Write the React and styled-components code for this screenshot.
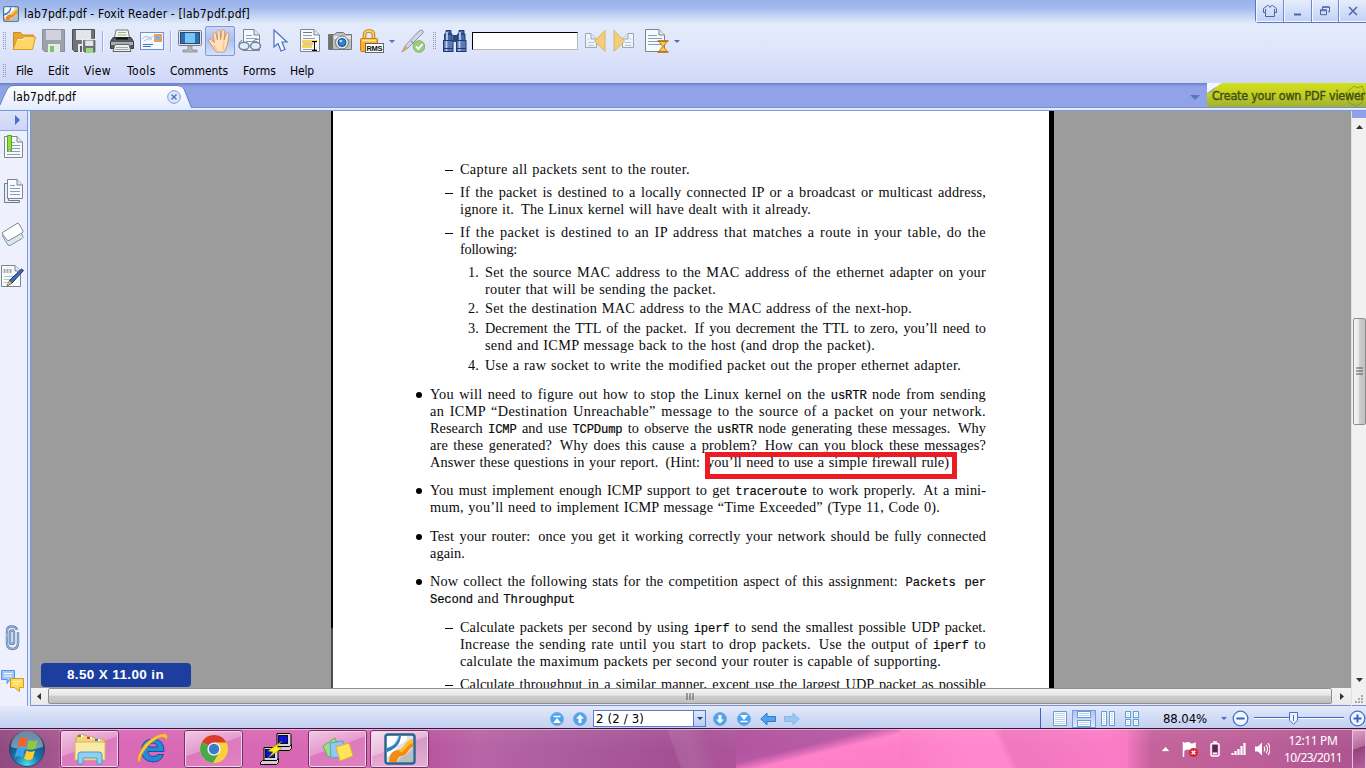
import React, { useLayoutEffect, useRef } from "react";
import styled, { createGlobalStyle } from "styled-components";

const Global = createGlobalStyle`
  * { box-sizing: border-box; }
  body { margin: 0; overflow: hidden; }
  svg { display: block; flex: none; }
`;

const uiFont = `"DejaVu Sans Condensed", "DejaVu Sans", sans-serif`;

const FitSpan = styled.span`
  display: inline-block;
  white-space: pre;
  flex: none;
`;

/* Spreads a run of text over an exact width through letter or word spacing. */
function Fit({ w, by = "letterSpacing", ws = 0, children }) {
  const ref = useRef(null);
  useLayoutEffect(() => {
    const el = ref.current;
    el.style.wordSpacing = ws + "px";
    el.style[by] = "0px";
    const a = el.getBoundingClientRect().width;
    el.style[by] = "1px";
    const b = el.getBoundingClientRect().width;
    if (b > a) el.style[by] = (w - a) / (b - a) + "px";
  }, [w, by, ws]);
  return <FitSpan ref={ref}>{children}</FitSpan>;
}

const Screen = styled.div`
  width: 1366px;
  height: 768px;
  display: flex;
  flex-direction: column;
  overflow: hidden;
  font-family: ${uiFont};
  font-size: 12px;
  color: #000;
`;

/* ---------- header ---------- */
const Header = styled.header`
  height: 83px;
  flex: none;
  display: flex;
  flex-direction: column;
  background: linear-gradient(#98b2ea 0, #a3bbed 8px, #c4d5f4 16px, #e3ebfb 24px, #e2e8fb 40px, #d0d8f8 83px);
`;
const TitleBar = styled.div`
  height: 26px;
  display: flex;
  align-items: flex-start;
`;
const TitleText = styled.div`
  display: flex;
  align-items: center;
  gap: 5px;
  height: 27px;
  padding-left: 3px;
  flex: 1;
`;
const WinButtons = styled.div`
  display: flex;
  width: 111px;
  height: 23px;
  border: 1px solid #5a76c8;
  border-width: 0 0 1px 1px;
  border-radius: 0 0 0 4px;
  background: linear-gradient(#e6edfb, #d3dff9 50%, #c3d1f4);
`;
const WinButton = styled.div`
  width: 28px;
  display: flex;
  align-items: center;
  justify-content: center;
  border-left: ${(p) => (p.$first ? "0" : "1px solid #6d86cf")};
  box-shadow: inset 1px -1px 0 #f4f7ff;
`;
const Toolbar = styled.div`
  height: 30px;
  display: flex;
  align-items: center;
  padding-left: 3px;
`;
const Slot = styled.div`
  width: ${(p) => p.$w || 24}px;
  height: ${(p) => p.$h || 24}px;
  margin-left: ${(p) => p.$ml || 0}px;
  flex: none;
  display: flex;
  align-items: center;
  justify-content: center;
`;
const ActiveSlot = styled(Slot)`
  border: 1px solid #8098d8;
  border-radius: 2px;
  background: linear-gradient(#c9d6f8, #aabff2 45%, #d4e2ff);
`;
const Separator = styled.div`
  width: 2px;
  height: 21px;
  margin-left: ${(p) => p.$ml}px;
  background: #9db1e4;
  border-right: 1px solid #f5f8ff;
  flex: none;
`;
const Grip = styled.div`
  width: 3px;
  height: ${(p) => p.$h}px;
  margin-left: ${(p) => p.$ml || 0}px;
  background-image: conic-gradient(transparent 75%, #8f94a8 0);
  background-size: 2px 2px;
  flex: none;
`;
const Caret = styled.div`
  width: 0;
  height: 0;
  margin-left: ${(p) => p.$ml || 0}px;
  border: ${(p) => p.$s || 3}px solid transparent;
  border-top-color: ${(p) => p.$c || "#4a6fc0"};
  border-bottom: 0;
  flex: none;
`;
const FindInput = styled.div`
  width: 106px;
  height: 18px;
  margin-left: 5px;
  background: #fff;
  border: 1px solid #b8b8b8;
  border-top-color: #000;
  border-left-color: #000;
  flex: none;
`;
const MenuBar = styled.nav`
  height: 27px;
  display: flex;
  align-items: center;
  padding: 2px 0 0 3px;
`;
const MenuItem = styled.span`
  margin-left: ${(p) => p.$ml}px;
  display: flex;
`;

/* ---------- tabs ---------- */
const TabBar = styled.div`
  height: 28px;
  flex: none;
  display: flex;
  justify-content: space-between;
  background: linear-gradient(#6b7fc4 0, #8c9fe2 3px, #90a3e8 5px, #90a3e8 24px, #7a8fd8 24px, #7a8fd8 25px, #e6edff 25px, #dfe8ff 27px, #7b98e0 27px);
`;
const Tab = styled.div`
  width: 192px;
  height: 26px;
  display: grid;
  grid-template-areas: "stack";
  > * { grid-area: stack; }
`;
const TabLabel = styled.div`
  display: flex;
  align-items: center;
  justify-content: space-between;
  padding: 2px 11px 0 13px;
`;
const TabRight = styled.div`
  display: flex;
  gap: 7px;
  align-items: center;
  height: 24px;
`;
const TabCaret = styled.div`
  padding-top: 5px;
`;
const Banner = styled.div`
  width: 159px;
  height: 24px;
  display: grid;
  grid-template-areas: "stack";
  background: linear-gradient(#d3e01c, #c3d022 45%, #9fb030);
  color: #3f4d12;
  font-size: 12.5px;
  -webkit-text-stroke: 0.35px #3f4d12;
  > * { grid-area: stack; }
`;
const BannerText = styled.div`
  padding: 5px 0 0 5px;
  line-height: 16px;
`;

/* ---------- work area ---------- */
const Work = styled.div`
  height: 595px;
  display: flex;
  flex: none;
`;
const Sidebar = styled.aside`
  width: 31px;
  display: flex;
  flex-direction: column;
  align-items: flex-start;
  background: linear-gradient(90deg, #eef0fe 27px, #7b98e0 27px 28px, #e3ebfd 28px 30px, #7b98e0 30px);
`;
const SideToggle = styled.div`
  width: 27px;
  height: 20px;
  padding: 4px 0 0 15px;
  background: linear-gradient(#dbe2fa, #ccd5f7);
  border-bottom: 1px solid #8fa3e0;
`;
const SideIcon = styled.div`
  margin: ${(p) => p.$mt}px 0 0 1px;
  width: 24px;
  height: 26px;
`;
const Viewer = styled.div`
  width: 1320px;
  display: flex;
  flex-direction: column;
`;
const Canvas = styled.main`
  position: relative;
  height: 577px;
  flex: none;
  display: flex;
  justify-content: center;
  background: #9c9c9c;
  overflow: hidden;
  padding-left: 3px;
`;
const Page = styled.article`
  position: relative;
  width: 723px;
  height: 700px;
  flex: none;
  padding: 50px 0 0 84px;
  border-right: 5px solid #000;
  background:
    linear-gradient(#000 0 516px, #4c4c4c 518px) 0 0 / 2px 100% no-repeat,
    #fff;
  font-family: "Liberation Serif", serif;
  font-size: 14.3px;
  line-height: 17px;
  color: #0a0a0a;
`;
const Item = styled.div`
  display: flex;
  margin-top: ${(p) => p.$gap}px;
`;
const Marker = styled.div`
  width: ${(p) => p.$w}px;
  padding-left: ${(p) => p.$pad}px;
  flex: none;
`;
const Bullet = styled.div`
  width: 6px;
  height: 6px;
  margin-top: 6px;
  border-radius: 50%;
  background: #000;
`;
const Dash = styled.div`
  width: 8px;
  height: 1px;
  margin-top: 9px;
  background: #000;
`;
const Line = styled.div`
  height: 17px;
  display: flex;
`;
const Code = styled.code`
  font-family: "Liberation Mono", monospace;
  font-size: 12.2px;
  letter-spacing: -0.15px;
  vertical-align: 0.5px;
  line-height: 1;
  -webkit-text-stroke: 0.2px #000;
`;
const SentenceGap = styled.span`
  padding-right: 2.5px;
`;
const Highlight = styled.div`
  position: absolute;
  left: 374px;
  top: 341px;
  width: 252px;
  height: 27px;
  border: 5px solid #ed1c24;
`;
const PageSize = styled.div`
  position: absolute;
  left: 10px;
  bottom: 1px;
  width: 150px;
  height: 24px;
  border-radius: 4px;
  background: #1b3e9f;
  color: #fff;
  font: bold 13.5px/24px "Liberation Sans", sans-serif;
  display: flex;
  padding-left: 26px;
`;
const HScroll = styled.div`
  height: 18px;
  display: flex;
  align-items: stretch;
  background: linear-gradient(#f4f4f4, #e9e9e9);
  border-bottom: 1px solid #7b8fd0;
  padding-bottom: 1px;
`;
const HArrow = styled.div`
  width: ${(p) => p.$w}px;
  display: flex;
  align-items: center;
  padding-left: ${(p) => p.$pl}px;
`;
const HThumb = styled.div`
  width: 1284px;
  height: 16px;
  border: 1px solid #8f8f8f;
  border-radius: 2px;
  background: linear-gradient(#f5f5f5, #e6e6e6 45%, #cecece 50%, #bfbfbf);
  display: flex;
  align-items: center;
  justify-content: center;
`;
const VScroll = styled.div`
  width: 15px;
  display: flex;
  flex-direction: column;
  align-items: center;
  background: #f1f1f1;
  border-left: 1px solid #e2e2e2;
`;
const VTop = styled.div`
  width: 15px;
  height: 7px;
  background: #90a3e8;
`;
const VArrow = styled.div`
  height: 19px;
  padding-top: ${(p) => p.$pt}px;
`;
const VThumb = styled.div`
  width: 13px;
  height: 107px;
  margin: 181px 0 244px 1px;
  border: 1px solid #8f8f8f;
  border-radius: 2px;
  background: linear-gradient(90deg, #f5f5f5, #e6e6e6 45%, #cecece 50%, #bfbfbf);
  display: flex;
  align-items: center;
  justify-content: center;
`;
const Corner = styled.div`
  width: 14px;
  height: 18px;
  margin-top: auto;
  background: #f0f0f0;
  border-bottom: 1px solid #7b8fd0;
  padding: 7px 0 0 1px;
`;

/* ---------- status bar ---------- */
const StatusBar = styled.footer`
  height: 22px;
  flex: none;
  display: flex;
  align-items: center;
  padding: 3px 0 0 550px;
  background: linear-gradient(#e4eafa, #d3dcf6 50%, #c2d0f2);
  font-size: 13px;
`;
const PageBox = styled.div`
  width: 113px;
  height: 17px;
  margin: 0 7px 0 6px;
  padding-left: 2px;
  display: flex;
  align-items: center;
  justify-content: space-between;
  background: #fff;
  border: 1px solid #5879cc;
`;
const DropButton = styled.div`
  width: 12px;
  height: 15px;
  display: flex;
  align-items: center;
  justify-content: center;
  background: linear-gradient(#dfe8fc, #b9caf3);
  border-left: 1px solid #5879cc;
`;
const StatusIcon = styled.div`
  margin-right: ${(p) => p.$mr}px;
`;
const ViewModes = styled.div`
  display: flex;
  align-items: center;
  height: 22px;
  margin-left: 240px;
  border-left: 1px solid #4060c8;
  padding-left: 7px;
`;
const ViewMode = styled.div`
  width: 24px;
  height: 18px;
  display: flex;
  align-items: center;
  justify-content: center;
  ${(p) => p.$on && "border: 1px solid #7d97dc; background: linear-gradient(#aec2f2, #dfe9ff);"}
`;
const ZoomText = styled.div`
  margin-left: 19px;
`;

/* ---------- taskbar ---------- */
const Taskbar = styled.div`
  height: 40px;
  flex: none;
  display: flex;
  border-top: 1px solid #3a1535;
  box-shadow: inset 0 1px 0 rgba(255, 215, 240, 0.6);
  background:
    linear-gradient(rgba(255, 255, 255, 0.06), rgba(255, 255, 255, 0) 50%),
    linear-gradient(to bottom right, #ad5099 0, #b658a4 42%, #e06cb8 50%, #ff82c9 56%, #fb7cc5) 736px 0 / 164px 40px no-repeat,
    linear-gradient(70deg, transparent 30%, rgba(255, 255, 255, 0.09) 32% 44%, transparent 60%) 640px 0 / 120px 40px no-repeat,
    linear-gradient(90deg, #8f4a80 0, #a4568e 58px, #d968b6 62px, #d868b4 370px, #b9559f 430px, #b765a6 480px, #ab5d9e 560px, #a35093 680px, #ad5499 736px, transparent 736px),
    linear-gradient(65deg, #fb7cc5 0, #ff86cc 60px, #ff88cd 100px, #f176be 108px, #fa7cc6 200px, #f678bf 100%) 900px 0 / 228px 40px no-repeat,
    linear-gradient(90deg, #f678bf 1125px, #c4629b 1152px, #bb5f98 1260px, #ad5590 1352px);
`;
const StartCell = styled.div`
  width: 60px;
  padding: 1px 0 0 8px;
`;
const TaskButton = styled.div`
  width: 59px;
  height: 38px;
  margin: 1px ${(p) => p.$mr || 3}px 0 0;
  display: flex;
  align-items: center;
  justify-content: center;
  ${(p) =>
    p.$open &&
    `border: 1px solid #f6d3ea; border-radius: 3px; outline: 1px solid #74305f; outline-offset: -1px;
     box-shadow: inset 0 0 0 1px #f6d3ea;
     background: linear-gradient(160deg, rgba(255,255,255,.62), rgba(255,255,255,.32) 45%, rgba(255,255,255,.1) 46%, rgba(255,255,255,.18));`}
  ${(p) => p.$active && `background: linear-gradient(160deg, rgba(255,255,255,.8), rgba(255,255,255,.55) 45%, rgba(255,255,255,.38) 46%, rgba(255,255,255,.55));`}
`;
const Tray = styled.div`
  margin-left: auto;
  display: flex;
  align-items: center;
  height: 40px;
`;
const TrayIcon = styled.div`
  margin-right: ${(p) => p.$mr}px;
`;
const Clock = styled.div`
  width: 72px;
  padding-right: 6px;
  display: flex;
  flex-direction: column;
  align-items: center;
  color: #fff;
  font: 12px/17px "Noto Sans", sans-serif;
`;
const ShowDesktop = styled.div`
  width: 14px;
  height: 39px;
  border: 1px solid #f0c2dc;
  background: linear-gradient(160deg, #dba0c4, #b76a9d 45%, #93447c 46%, #b5609b);
`;

/* ---------- drawings ---------- */
const Svg = ({ w = 24, h = 24, vb, children }) => (
  <svg width={w} height={h} viewBox={vb || `0 0 ${w} ${h}`} fill="none">
    {children}
  </svg>
);

const FoxitIcon = ({ s }) => (
  <Svg w={s} h={s} vb="0 0 32 32">
    <rect x="1.5" y="1.5" width="29" height="29" rx="2.5" fill="#dfe3e8" stroke="#24648f" strokeWidth="2.4" />
    <path d="M3 3h10c-2 8-6 11-10 13z" fill="#fff" />
    <path d="M3 15c7-2 10-5 12-12h3c-1 9-6 14-15 17z" fill="#2b7ec0" />
    <path d="M3 19C12 16 16 11 17 3h6c0 4-2 6-6 8-6 3-5 10-14 13z" fill="#fff" />
    <path d="M5 29c0-8 3-11 9-12 7-1 6-9 15-11v8c-5 2-5 6-8 8-4 2-7 0-8 7z" fill="#f58a12" />
    <path d="M14 17c7-1 6-9 15-11v4c-7 2-7 8-12 9z" fill="#ffc02a" />
    <path d="M14 29c1-6 5-5 8-7s4-5 7-7v14z" fill="#b9bcc0" />
  </Svg>
);
const FolderIcon = () => (
  <Svg>
    <path d="M1.500 20.500V3.500h7l2 2.500h11v5" fill="#e9a92e" stroke="#c98a1b" />
    <path d="M1 20.500L5 9.500h5l1.500-1.500H23.500L20.500 20.500z" fill="#ffd567" stroke="#d89a24" />
    <path d="M5.500 10.500h6l1-1.500h9" stroke="#fff0b5" />
  </Svg>
);
const DiskShape = ({ dark }) => (
  <>
    <path d="M.5.5h22v22h-20l-2-2z" fill={dark ? "#6f7276" : "#9da1ab"} stroke={dark ? "#4d4f52" : "#8b8f99"} />
    <path d="M4 1h15v10H4z" fill={dark ? "#e3e6ea" : "#cfd3de"} />
    <path d="M6 15h12v8H6z" fill="#e4eae8" />
    <path d="M8 17h4v6H8z" fill={dark ? "#555" : "#7cc46a"} />
  </>
);
const SaveAllIcon = () => (
  <Svg>
    <DiskShape dark />
    <g transform="translate(11 11) scale(.54)">
      <rect x="-2" y="-2" width="27" height="27" fill="#fff" />
      <DiskShape dark />
      <path d="M6 15h12v8H6z" fill="#8fe07a" />
    </g>
  </Svg>
);
const PrinterIcon = () => (
  <Svg>
    <path d="M6 1h12l2 10H4z" fill="#f2f4f0" stroke="#75786f" />
    <path d="M8 3.500h8M7.500 6h9" stroke="#9ab38c" />
    <path d="M3 8.500h18l2.500 4v7h-23v-7z" fill="#555a5e" stroke="#37393c" />
    <path d="M1 13h22v3H1z" fill="#a9adb1" />
    <path d="M5 15.500h14l2 7H3z" fill="#eceef0" stroke="#666" />
    <path d="M6 18.500h12M5.500 20.500h13" stroke="#9aa" />
    <path d="M6 9.500h12" stroke="#111" strokeWidth="2" />
  </Svg>
);
const MailIcon = () => (
  <Svg>
    <rect x=".5" y="3.500" width="23" height="17" fill="#f6faff" stroke="#6b93cf" />
    <path d="M2 10q3-4 6-2t5-1M4 12q3-3 8-2" stroke="#9fbde6" />
    <path d="M3 15.500h10M3 17.500h8" stroke="#3b71c8" />
    <rect x="14.500" y="5.500" width="7" height="7" fill="#f0a045" stroke="#c86f28" strokeDasharray="1 1" />
    <rect x="16" y="7" width="4" height="4" fill="#7db0e8" />
  </Svg>
);
const MonitorIcon = () => (
  <Svg>
    <rect x=".5" y="1.500" width="23" height="15" rx="1" fill="#dfe2e6" stroke="#777b80" />
    <rect x="2.500" y="3.500" width="19" height="11" fill="#2c6db5" stroke="#274a75" />
    <path d="M7 4h10v10H7z" fill="#77c4f5" />
    <path d="M10 17h4v4h5v2H5v-2h5z" fill="#b7babd" stroke="#85898d" strokeWidth=".8" />
  </Svg>
);
const HandIcon = () => (
  <Svg>
    <path d="M8 23l-4.500-7-3-4.500c.5-2 2.500-1.500 3.500 0l2.500 2L5 5.500C5 3 7.500 3 8 5l1.500 6L9 2.500C9.500.500 12 .500 12 2.500l.6 8L14 2c.5-2 3-1.500 2.700.5L16 11l2.500-6.500c1-1.500 2.800-.5 2.500 1-1 5-1 9-2.500 12l-2 5.500z" fill="#ffe2bd" stroke="#cf8a4c" strokeWidth=".8" />
    <path d="M9 22l-3-6M16 12l-1 9" stroke="#f3c08e" strokeWidth="1.200" />
  </Svg>
);
const PageShape = ({ x = 0, y = 0, w = 18, h = 21, lines = 4, tone = "#8b9db8" }) => (
  <g transform={`translate(${x} ${y})`}>
    <path d={`M.5 .5H${w - 6}L${w - 0.5} 6V${h - 0.5}H.5z`} fill="#f5fafd" stroke="#7d858d" />
    <path d={`M${w - 6} .5V6H${w - 0.5}`} fill="#dce6ee" stroke="#7d858d" />
    {Array.from({ length: lines }, (_, i) => (
      <path key={i} d={`M3 ${6.5 + i * 3}H${i < 1 ? w - 8 : w - 3}`} stroke={tone} />
    ))}
  </g>
);
const ReadIcon = () => (
  <Svg>
    <PageShape x={5} w={17} h={22} lines={3} />
    <path d="M1 15q0-2 3-4M14 13q2-3 8-3" stroke="#6e83a0" />
    <ellipse cx="6" cy="17" rx="5" ry="3.700" fill="#e2ecf8" stroke="#6e83a0" strokeWidth="1.500" />
    <ellipse cx="17.500" cy="17" rx="5" ry="3.700" fill="#e2ecf8" stroke="#6e83a0" strokeWidth="1.500" />
  </Svg>
);
const PointerIcon = () => (
  <Svg w={16}>
    <path d="M2 1v17l4-3.500L9 22l4-1.500-3-7.500h5z" fill="#eef5ff" stroke="#4c72c4" strokeWidth="1.200" />
  </Svg>
);
const SelectTextIcon = () => (
  <Svg>
    <PageShape x={1} y={0} w={20} h={23} lines={1} />
    <path d="M4 3.500h9" stroke="#777" />
    <path d="M3 11h15v3H3zM3 16h10v3H3z" fill="#ffd24d" />
    <path d="M4 9.500h12M4 15h10M4 20.500h14" stroke="#999" />
    <path d="M13 12.500h5M13 21.500h5M15.500 12v10" stroke="#000" />
  </Svg>
);
const CameraIcon = () => (
  <Svg>
    <path d="M.5 5.500h6l2-2h7l2 2h6v15H.5z" fill="#b9bec2" stroke="#73787c" />
    <path d="M1 6h4v14H1z" fill="#77716a" />
    <path d="M6 7h17v3H6z" fill="#e6e9eb" />
    <circle cx="14" cy="13.500" r="6.500" fill="#e8ebee" stroke="#777" />
    <circle cx="14" cy="13.500" r="4" fill="#2b84d8" stroke="#174d88" />
    <circle cx="12.800" cy="12" r="1.300" fill="#bfe4ff" />
  </Svg>
);
const RmsText = styled.text`
  font: bold 7.5px "Liberation Sans", sans-serif;
`;
const LockIcon = () => (
  <Svg>
    <path d="M4.500 10V6q0-4 4.500-4t4.500 4v4" stroke="#b87914" strokeWidth="3.600" />
    <path d="M4.500 10V6q0-4 4.500-4t4.500 4v4" stroke="#ffd257" strokeWidth="1.800" />
    <rect x=".5" y="9.500" width="17" height="13" rx="1" fill="#f5b02e" stroke="#c17f17" />
    <path d="M2 11.500h14" stroke="#ffe08a" strokeWidth="2" />
    <rect x="5.500" y="14.500" width="18" height="9" fill="#fff" stroke="#666" />
    <RmsText x="6.500" y="21.700" textLength="16" fill="#111">RMS</RmsText>
  </Svg>
);
const SignIcon = () => (
  <Svg>
    <path d="M1 23l3-6L18 2q3-2 4 0t-2 4L7 19z" fill="#cfd7e4" stroke="#8f96a6" />
    <path d="M1 23l3-6 3 2z" fill="#d9a566" />
    <path d="M10 12l4 3" stroke="#777" />
    <circle cx="18" cy="17.500" r="5.800" fill="#9ccc7d" stroke="#82b266" />
    <path d="M15 17.500l2.500 2.500 4-5" stroke="#fff" strokeWidth="1.800" />
  </Svg>
);
const BinocularsIcon = () => (
  <Svg>
    {[0, 13].map((x) => (
      <g key={x} transform={`translate(${x} 0)`}>
        <path d="M3 1.500h5V5H3zM1.500 5h7.500v7H1.500z" fill="#4668a5" stroke="#213a72" />
        <rect x=".5" y="11.500" width="9.500" height="11" fill="#5a7ab5" stroke="#213a72" />
        <path d="M3.500 12v10M4 3v8" stroke="#b9cdf0" strokeWidth="1.800" />
        <path d="M1 19.500h9" stroke="#20386f" />
      </g>
    ))}
    <path d="M9.500 6h5v7h-5z" fill="#2c4680" />
  </Svg>
);
const FindStepIcon = ({ next }) => (
  <Svg w={22}>
    <g transform={next ? "matrix(-1 0 0 1 22 0)" : undefined}>
      <g opacity=".65"><PageShape x={1} y={4} w={12} h={15} lines={3} tone="#9fb3d8" /></g>
      <path d="M21 1.500v21L10.500 12z" fill="#f2cf7c" stroke="#dcb35b" />
    </g>
  </Svg>
);
const HourglassPageIcon = () => (
  <Svg>
    <PageShape w={20} h={23} lines={4} />
    <path d="M12.500 12h11M12.500 23h11" stroke="#a8650c" strokeWidth="1.600" />
    <path d="M14 12.500h8L18.500 17.500l3.500 5h-8l3.500-5z" fill="#ffc65a" stroke="#bd7817" />
  </Svg>
);

const sideIcons = {
  bookmark: (
    <Svg h={26}>
      <PageShape x={3} y={1} w={19} h={22} lines={5} />
      <path d="M6.500 .500h4v16l-2-2.500-2 2.500z" fill="#8fe03a" stroke="#5aa51a" />
    </Svg>
  ),
  pages: (
    <Svg h={26}>
      <path d="M3.500 4.500h4v17h11v2h-15z" fill="#e4f0f5" stroke="#727b82" />
      <PageShape x={6} y={0} w={16} h={20} lines={4} />
    </Svg>
  ),
  layers: (
    <Svg h={26}>
      <path d="M2 13q-1 1 0 2l5 8q1 1 2 .500l12-7q1.500-1 1-2l-3-6z" fill="#dbe8f2" stroke="#8893a0" />
      <path d="M1.500 10.500L16 1.500q1.500-.500 2 .500l4 7q.500 1-1 2L8 18.500q-1.500.500-2-.500l-4.500-6z" fill="#fff" stroke="#7d858d" />
    </Svg>
  ),
  sign: (
    <Svg h={26}>
      <PageShape x={0} y={1} w={20} h={22} lines={0} />
      <path d="M3.500 5v4M6.500 5v4M9.500 5v4" stroke="#aaa" strokeWidth="2" />
      <path d="M3 12.500h13M3 15.500h10M3 18.500h8" stroke="#b9c2cc" />
      <path d="M6 22l3-6L20.500 5l2 1.500L11 19z" fill="#3f6dc0" stroke="#1b2b4f" />
      <path d="M6 22l2-5 3 2z" fill="#f3c04e" />
    </Svg>
  ),
  clip: (
    <Svg h={26}>
      <path d="M17 7v11q0 6-5.500 6T6 18V9M6 12V6q0-4.500 4.500-4.500T16 5M9 17V8q0-2.500 2-2.500t2 2.500v9q0 2-2 2t-2-2" stroke="#5c7da6" strokeWidth="2.400" />
      <path d="M17 7v11q0 6-5.500 6T6 18V9M6 12V6q0-4.500 4.500-4.500T16 5M9 17V8q0-2.500 2-2.500t2 2.500v9q0 2-2 2t-2-2" stroke="#a9c3e3" />
    </Svg>
  ),
  comments: (
    <Svg h={26}>
      <path d="M.5 1.500h13v9H9L6 14.500v-4H.5z" fill="#9fc5fa" stroke="#5a8fdc" />
      <path d="M3 4.500h8M3 7h8" stroke="#fff" />
      <path d="M9.500 9.500h13v9h-4v4l-5-4h-4z" fill="#ffd955" stroke="#d09d1d" />
      <path d="M12 12.500h8M12 15h6" stroke="#fff6cf" />
    </Svg>
  ),
};

const RoundNav = ({ d, bar }) => (
  <Svg w={14} h={14}>
    <circle cx="7" cy="7" r="6.500" fill="#4ba4ea" stroke="#78aee0" />
    <path d={d} fill="#fff" />
    {bar && <path d={bar} stroke="#fff" strokeWidth="1.500" />}
  </Svg>
);
const ArrowNav = ({ fwd }) => (
  <Svg w={16} h={14}>
    <path transform={fwd ? "matrix(-1 0 0 1 16 0)" : undefined} d="M.8 7L7 1v3.500h8.500v5H7V13z" fill={fwd ? "#9bc8f2" : "#4ba4f0"} stroke={fwd ? "#8ab5e6" : "#3476c4"} />
  </Svg>
);
const MiniPage = ({ x, y, w, h }) => (
  <g>
    <rect x={x + 0.5} y={y + 0.5} width={w - 1} height={h - 1} fill="#fff" stroke="#5f9fd8" />
    {Array.from({ length: Math.floor((h - 3) / 2) }, (_, i) => (
      <path key={i} d={`M${x + 2} ${y + 2.5 + i * 2}h${w - 4}`} stroke="#a9c6e8" strokeWidth=".8" />
    ))}
  </g>
);

const WindowsOrb = () => (
  <Svg w={38} h={38}>
    <defs>
      <radialGradient id="orb" cx="50%" cy="95%" r="90%">
        <stop offset="0" stopColor="#45e2f0" />
        <stop offset=".4" stopColor="#1a78b0" />
        <stop offset="1" stopColor="#123b66" />
      </radialGradient>
    </defs>
    <circle cx="19" cy="19" r="17.500" fill="url(#orb)" stroke="#3a3f58" />
    <path d="M3 17a16 16 0 0 1 32 0q-16 5-32 0z" fill="#c3d9e6" opacity=".5" />
    <path d="M11.500 8.500q4-2.500 8 .5l-2 8.500q-4-2.500-8-.5z" fill="#f0642a" />
    <path d="M21 10q4 2.500 9 0l-2.500 8.500q-4.500 2.500-8.500 0z" fill="#8fc83a" />
    <path d="M9 19q4-2.500 8 0l-2.500 8.500q-4-2.500-8 0z" fill="#3da3e6" />
    <path d="M18.500 20.500q4 2.500 8.500 0l-2.500 8.500q-4.500 2.500-8.500-.5z" fill="#ffcd2e" />
  </Svg>
);
const ExplorerIcon = () => (
  <Svg w={34} h={32}>
    <path d="M3 6l2-4h8l2 2h6l2 2h8v20H2z" fill="#f3d67a" stroke="#c9a145" />
    <path d="M5 3h5M14 5h5M22 7h5" stroke="#fff" strokeWidth="2" />
    <path d="M5 3h3" stroke="#25a83a" strokeWidth="2" />
    <path d="M14 5h3" stroke="#d33" strokeWidth="2" />
    <path d="M22 7h3" stroke="#28c" strokeWidth="2" />
    <path d="M2 9h30v18H2z" fill="#fbeaa6" stroke="#d8b65a" />
    <path d="M5 31v-9q0-3 3-3h18q3 0 3 3v9h-5v-6H10v6z" fill="#8fd0ef" stroke="#4c9cc8" />
  </Svg>
);
const IeIcon = () => (
  <Svg w={34} h={32}>
    <path d="M29 18.500H13q.5 5 5 5 3.500 0 5-2h5.500Q26 29 18 29 6.500 28 6.500 17.500 7 6 18 6q11.500.500 11 12.500zM13.300 14h9.400q-.7-4-4.700-4t-4.700 4z" fill="#2588d8" stroke="#14549c" />
    <path d="M5 29q-4 0-1-8Q9 9 21 3q9-4 11-1 1 2-1 6 0-4-4-4-6 1-14 9Q5 22 5 29z" fill="#fbc63c" stroke="#d3902a" strokeWidth=".7" />
  </Svg>
);
const ChromeIcon = () => (
  <Svg w={30} h={30}>
    <circle cx="15" cy="15" r="14" fill="#f8d23c" />
    <path d="M15 15L2.900 8A14 14 0 0 1 27.500 8.500H15z" fill="#db3b2e" />
    <path d="M15 15L2.900 8A14 14 0 0 0 14 29l6-10z" fill="#4aa84c" />
    <circle cx="15" cy="15" r="6.600" fill="#f4f4f4" />
    <circle cx="15" cy="15" r="5.200" fill="#3b7cc9" />
  </Svg>
);
const Computer = ({ x, y }) => (
  <g transform={`translate(${x} ${y})`}>
    <path d="M4 .500h13l1 1v12H4z" fill="#d8d8d8" stroke="#000" />
    <rect x="5.500" y="2.500" width="9" height="8" fill="#0a12d8" stroke="#111" />
    <path d="M2.500 13.500h14l2-2v4l-2 2H.500v-2z" fill="#d0d0d0" stroke="#000" />
  </g>
);
const PuttyIcon = () => (
  <Svg w={34} h={32}>
    <Computer x={14} y={0} />
    <Computer x={1} y={14} />
    <path d="M23 8L9 18l5 1-5 6 14-10-5-1z" fill="#ffee12" stroke="#8a7d00" strokeWidth=".5" />
  </Svg>
);
const NotesIcon = () => (
  <Svg w={34} h={30}>
    <path d="M2 12l12-8 5 14-12 5z" fill="#9fdc8a" stroke="#6bb158" />
    <path d="M9 9l13-2 1 16-13 1z" fill="#8fc8f0" stroke="#5a9fd0" />
    <path d="M15 13l13-4 4 13-13 5z" fill="#ffe35e" stroke="#d9b52c" />
  </Svg>
);

/* ---------- document text ---------- */
const doc = [
  { k: "dash", gap: 0, lines: [["Capture all packets sent to the router.", 230]] },
  { k: "dash", gap: 6, lines: [["If the packet is destined to a locally connected IP or a broadcast or multicast address,"], ["ignore it. ~The Linux kernel will have dealt with it already.", 351]] },
  { k: "dash", gap: 6, lines: [["If the packet is destined to an IP address that matches a route in your table, do the"], ["following:", 57]] },
  { k: "num", n: "1.", gap: 6, lines: [["Set the source MAC address to the MAC address of the ethernet adapter on your"], ["router that will be sending the packet.", 231]] },
  { k: "num", n: "2.", gap: 2, lines: [["Set the destination MAC address to the MAC address of the next-hop.", 427]] },
  { k: "num", n: "3.", gap: 3, lines: [["Decrement the TTL of the packet. ~If you decrement the TTL to zero, you’ll need to"], ["send and ICMP message back to the host (and drop the packet).", 390]] },
  { k: "num", n: "4.", gap: 3, lines: [["Use a raw socket to write the modified packet out the proper ethernet adapter.", 476]] },
  {
    k: "dot", gap: 12, lines: [
      ["You will need to figure out how to stop the Linux kernel on the `usRTR` node from sending"],
      ["an ICMP “Destination Unreachable” message to the source of a packet on your network."],
      ["Research `ICMP` and use `TCPDump` to observe the `usRTR` node generating these messages. ~Why"],
      ["are these generated? ~Why does this cause a problem? ~How can you block these messages?"],
      ["Answer these questions in your report. ~(Hint: ~you’ll need to use a simple firewall rule)", 519],
    ],
  },
  { k: "dot", gap: 11, lines: [["You must implement enough ICMP support to get `traceroute` to work properly. ~At a mini-"], ["mum, you’ll need to implement ICMP message “Time Exceeded” (Type 11, Code 0).", 510]] },
  { k: "dot", gap: 12, lines: [["Test your router: ~once you get it working correctly your network should be fully connected"], ["again.", 35]] },
  { k: "dot", gap: 11, lines: [["Now collect the following stats for the competition aspect of this assignment: ~`Packets per`"], ["`Second` and `Throughput`", 145]] },
  {
    k: "dash", gap: 12, lines: [
      ["Calculate packets per second by using `iperf` to send the smallest possible UDP packet."],
      ["Increase the sending rate until you start to drop packets. ~Use the output of `iperf` to"],
      ["calculate the maximum packets per second your router is capable of supporting.", 481],
    ],
  },
  { k: "dash", gap: 6, lines: [["Calculate throughput in a similar manner, except use the largest UDP packet as possible"]] },
];
const kinds = {
  dot: { w: 15, pad: 1, full: 556 },
  dash: { w: 45, pad: 30, full: 526 },
  num: { w: 70, pad: 53, full: 501 },
};
const rich = (text) =>
  text.split(/(`[^`]*`|~)/).map((part, i) => {
    if (part === "~") return <SentenceGap key={i} />;
    if (part.startsWith("`")) return <Code key={i}>{part.slice(1, -1)}</Code>;
    return part;
  });

const menus = [["File", 10, 17], ["Edit", 15, 21], ["View", 15, 27], ["Tools", 16, 29], ["Comments", 14, 58], ["Forms", 15, 33], ["Help", 14, 24]];

export default function App() {
  return (
    <Screen>
      <Global />
      <Header>
        <TitleBar>
          <TitleText>
            <FoxitIcon s={16} />
            <Fit w={226}>lab7pdf.pdf - Foxit Reader - [lab7pdf.pdf]</Fit>
          </TitleText>
          <WinButtons>
            <WinButton $first>
              <Svg w={14} h={12}><path d="M4.500.500h1l1.500 2 1.500-2h1l4 3v4h-2v4h-9v-4h-2v-4zM2.500 8V4M11.500 8V4" stroke="#4a66a8" /></Svg>
            </WinButton>
            <WinButton><Svg w={8} h={10}><path d="M0 8.500h7" stroke="#4a66a8" strokeWidth="2" /></Svg></WinButton>
            <WinButton><Svg w={10} h={10}><path d="M2.500 3V.800h7v5H8M2.500 1.300h7M.500 3.700h6v5h-6zM.500 4.700h6" stroke="#4a66a8" /></Svg></WinButton>
            <WinButton><Svg w={10} h={10}><path d="M1 1l8 8M9 1L1 9" stroke="#4a66a8" strokeWidth="1.500" /></Svg></WinButton>
          </WinButtons>
        </TitleBar>
        <Toolbar>
          <Grip $h={18} />
          <Slot $ml={6}><FolderIcon /></Slot>
          <Slot $ml={6}><Svg><DiskShape /></Svg></Slot>
          <Slot $ml={6}><SaveAllIcon /></Slot>
          <Separator $ml={6} />
          <Slot $ml={6}><PrinterIcon /></Slot>
          <Slot $ml={6}><MailIcon /></Slot>
          <Separator $ml={6} />
          <Slot $ml={6}><MonitorIcon /></Slot>
          <ActiveSlot $w={30} $h={30} $ml={3}><HandIcon /></ActiveSlot>
          <Slot $ml={3}><ReadIcon /></Slot>
          <Slot $ml={10} $w={16}><PointerIcon /></Slot>
          <Slot $ml={11}><SelectTextIcon /></Slot>
          <Slot $ml={5}><CameraIcon /></Slot>
          <Slot $ml={8}><LockIcon /></Slot>
          <Caret $ml={5} />
          <Slot $ml={6}><SignIcon /></Slot>
          <Grip $h={18} $ml={8} />
          <Slot $ml={7}><BinocularsIcon /></Slot>
          <FindInput />
          <Slot $ml={6} $w={22}><FindStepIcon /></Slot>
          <Slot $ml={7} $w={22}><FindStepIcon next /></Slot>
          <Slot $ml={10}><HourglassPageIcon /></Slot>
          <Caret $ml={5} />
        </Toolbar>
        <MenuBar>
          <Grip $h={14} />
          {menus.map(([t, ml, w]) => (
            <MenuItem key={t} $ml={ml}><Fit w={w}>{t}</Fit></MenuItem>
          ))}
        </MenuBar>
      </Header>

      <TabBar>
        <Tab>
          <Svg w={192} h={26}>
            <defs>
              <linearGradient id="tab" x1="0" y1="0" x2="0" y2="1">
                <stop offset="0" stopColor="#fff" />
                <stop offset="1" stopColor="#e4ecfe" />
              </linearGradient>
            </defs>
            <path d="M0 26V22Q5 10 8 5Q10 2.500 14 2.500H177Q182 2.500 184 6L191 24.500V26z" fill="url(#tab)" />
            <path d="M0 22Q5 10 8 5Q10 2.500 14 2.500H177Q182 2.500 184 6L191.500 24.500" stroke="#6a80cc" />
          </Svg>
          <TabLabel>
            <Fit w={63}>lab7pdf.pdf</Fit>
            <Svg w={14} h={14}>
              <circle cx="7" cy="7" r="6.300" fill="#dfe7fb" stroke="#7e97d8" />
              <path d="M4.500 4.500l5 5M9.500 4.500l-5 5" stroke="#4f6fc0" strokeWidth="1.400" />
            </Svg>
          </TabLabel>
        </Tab>
        <TabRight>
          <TabCaret><Caret $s={5} $c="#5676c2" /></TabCaret>
          <Banner>
            <Svg w={159} h={24}>
              <path d="M0 0h15L0 10z" fill="#f5f7ff" />
              <path d="M15 0Q8 3 6 9L0 10Q8 4 15 0z" fill="#a9abb0" />
              <path d="M141 8l6-5 4 2 4-2 3 8-3 9-6 3-7-3-3-6zM145 9l10 8M153 8l-8 9" stroke="#8f9f2a" />
            </Svg>
            <BannerText><Fit w={153}>Create your own PDF viewer</Fit></BannerText>
          </Banner>
        </TabRight>
      </TabBar>

      <Work>
        <Sidebar>
          <SideToggle><Svg w={6} h={10}><path d="M0 0l5 5-5 5z" fill="#4a6fc8" /></Svg></SideToggle>
          <SideIcon $mt={4}>{sideIcons.bookmark}</SideIcon>
          <SideIcon $mt={18}>{sideIcons.pages}</SideIcon>
          <SideIcon $mt={17}>{sideIcons.layers}</SideIcon>
          <SideIcon $mt={16}>{sideIcons.sign}</SideIcon>
          <SideIcon $mt={335}>{sideIcons.clip}</SideIcon>
          <SideIcon $mt={18}>{sideIcons.comments}</SideIcon>
        </Sidebar>
        <Viewer>
          <Canvas>
            <Page>
              {doc.map((it, i) => {
                const k = kinds[it.k];
                return (
                  <Item key={i} $gap={it.gap}>
                    <Marker $w={k.w} $pad={k.pad}>
                      {it.k === "dot" ? <Bullet /> : it.k === "dash" ? <Dash /> : it.n}
                    </Marker>
                    <div>
                      {it.lines.map(([t, w], j) => (
                        <Line key={j}>
                          <Fit w={w || k.full} ws={w ? 0.8 : 1.6}>{rich(t)}</Fit>
                        </Line>
                      ))}
                    </div>
                  </Item>
                );
              })}
              <Highlight />
            </Page>
            <PageSize><Fit w={97}>8.50 X 11.00 in</Fit></PageSize>
          </Canvas>
          <HScroll>
            <HArrow $w={17} $pl={6}><Svg w={4} h={7}><path d="M4 0v7L0 3.500z" fill="#333" /></Svg></HArrow>
            <HThumb><Svg w={9} h={7}><path d="M1 0v7M4 0v7M7 0v7" stroke="#555" /></Svg></HThumb>
            <HArrow $w={19} $pl={8}><Svg w={4} h={7}><path d="M0 0v7l4-3.500z" fill="#333" /></Svg></HArrow>
          </HScroll>
        </Viewer>
        <VScroll>
          <VTop />
          <VArrow $pt={7}><Svg w={7} h={4}><path d="M0 4h7L3.500 0z" fill="#333" /></Svg></VArrow>
          <VThumb><Svg w={7} h={9}><path d="M0 1h7M0 4h7M0 7h7" stroke="#555" /></Svg></VThumb>
          <VArrow $pt={9}><Svg w={7} h={4}><path d="M0 0h7L3.500 4z" fill="#333" /></Svg></VArrow>
          <Corner>
            <Svg w={11} h={9}><path d="M8 1h2M8 4h2M5 4h2M8 7h2M5 7h2M2 7h2" stroke="#aaa" strokeWidth="2" /></Svg>
          </Corner>
        </VScroll>
      </Work>

      <StatusBar>
        <StatusIcon $mr={9}><RoundNav d="M3 11l4-5 4 5z" bar="M3.500 4.500h7" /></StatusIcon>
        <StatusIcon><RoundNav d="M7 2.500l4 4H8.500V11h-3V6.500H3z" /></StatusIcon>
        <PageBox>
          <Fit w={48}>2 (2 / 3)</Fit>
          <DropButton><Caret $c="#24407e" /></DropButton>
        </PageBox>
        <StatusIcon $mr={10}><RoundNav d="M7 11.500l4-4H8.500V3h-3v4.500H3z" /></StatusIcon>
        <StatusIcon $mr={9}><RoundNav d="M3 3l4 5 4-5z" bar="M3.500 9.500h7" /></StatusIcon>
        <StatusIcon $mr={8}><ArrowNav /></StatusIcon>
        <ArrowNav fwd />
        <ViewModes>
          <ViewMode><Svg w={14} h={15}><MiniPage x={0} y={0} w={14} h={15} /></Svg></ViewMode>
          <ViewMode $on><Svg w={14} h={16}><MiniPage x={0} y={0} w={14} h={7} /><MiniPage x={0} y={9} w={14} h={7} /></Svg></ViewMode>
          <ViewMode><Svg w={14} h={15}><MiniPage x={0} y={0} w={6} h={15} /><MiniPage x={8} y={0} w={6} h={15} /></Svg></ViewMode>
          <ViewMode><Svg w={14} h={15}><MiniPage x={0} y={0} w={6} h={7} /><MiniPage x={8} y={0} w={6} h={7} /><MiniPage x={0} y={8} w={6} h={7} /><MiniPage x={8} y={8} w={6} h={7} /></Svg></ViewMode>
        </ViewModes>
        <ZoomText><Fit w={44}>88.04%</Fit></ZoomText>
        <Caret $ml={14} />
        <Slot $ml={5} $w={17} $h={17}>
          <Svg w={17} h={17}><circle cx="8.500" cy="8.500" r="7.300" fill="#f2f6ff" stroke="#4672c8" strokeWidth="1.300" /><path d="M4.500 8.500h8" stroke="#3561c0" strokeWidth="2" /></Svg>
        </Slot>
        <Slot $ml={5} $w={90} $h={17}>
          <Svg w={90} h={17}>
            <path d="M0 7.500h90" stroke="#3f68c0" /><path d="M0 8.500h90" stroke="#fff" />
            <path d="M35.500 2.500h8v8l-4 3.500-4-3.500z" fill="#eef3ff" stroke="#4672c8" /><path d="M39.500 5v6" stroke="#4672c8" />
          </Svg>
        </Slot>
        <Slot $ml={5} $w={17} $h={17}>
          <Svg w={17} h={17}><circle cx="8.500" cy="8.500" r="7.300" fill="#f2f6ff" stroke="#4672c8" strokeWidth="1.300" /><path d="M4.500 8.500h8M8.500 4.500v8" stroke="#3561c0" strokeWidth="2" /></Svg>
        </Slot>
      </StatusBar>

      <Taskbar>
        <StartCell><WindowsOrb /></StartCell>
        <TaskButton $open><ExplorerIcon /></TaskButton>
        <TaskButton><IeIcon /></TaskButton>
        <TaskButton $open><ChromeIcon /></TaskButton>
        <TaskButton><PuttyIcon /></TaskButton>
        <TaskButton $open><NotesIcon /></TaskButton>
        <TaskButton $open $active><FoxitIcon s={32} /></TaskButton>
        <Tray>
          <TrayIcon $mr={12}><Svg w={9} h={6}><path d="M0 5.500h9L4.500.500z" fill="#fff" stroke="#8a4a72" strokeWidth=".5" /></Svg></TrayIcon>
          <TrayIcon $mr={11}>
            <Svg w={17} h={17}>
              <path d="M1.500 1v15M3 2.500q3-1.500 5 0t5 0v6q-3 1.500-5 0t-5 0z" fill="#fff" stroke="#fff" strokeWidth="1.500" />
              <circle cx="11.500" cy="11.500" r="4.500" fill="#d8232a" />
              <path d="M9.700 9.700l3.600 3.600M13.300 9.700l-3.600 3.600" stroke="#fff" strokeWidth="1.500" />
            </Svg>
          </TrayIcon>
          <TrayIcon $mr={11}>
            <Svg w={10} h={16}><rect x="1" y="2.500" width="8" height="12.500" rx="1.500" stroke="#fff" strokeWidth="1.500" /><path d="M3 1h4M3 12.500h4" stroke="#fff" strokeWidth="1.600" /><path d="M2.500 4h5v7h-5z" fill="#5b2850" /></Svg>
          </TrayIcon>
          <TrayIcon $mr={8}>
            <Svg w={16} h={14}><path d="M1.500 13v-2M4.500 13V9M7.500 13V7M10.500 13V4M13.500 13V1" stroke="#fff" strokeWidth="2.200" /></Svg>
          </TrayIcon>
          <TrayIcon $mr={10}>
            <Svg w={15} h={14}><path d="M0 4.500h3L7 .500v13L3 9.500H0z" fill="#fff" /><path d="M9 4.500q1.500 2.500 0 5M11 2.800q3 4.200 0 8.400M13 1q4 6 0 12" stroke="#fff" strokeWidth="1.100" /></Svg>
          </TrayIcon>
          <Clock>
            <Fit w={49}>12:11 PM</Fit>
            <Fit w={58}>10/23/2011</Fit>
          </Clock>
          <ShowDesktop />
        </Tray>
      </Taskbar>
    </Screen>
  );
}
